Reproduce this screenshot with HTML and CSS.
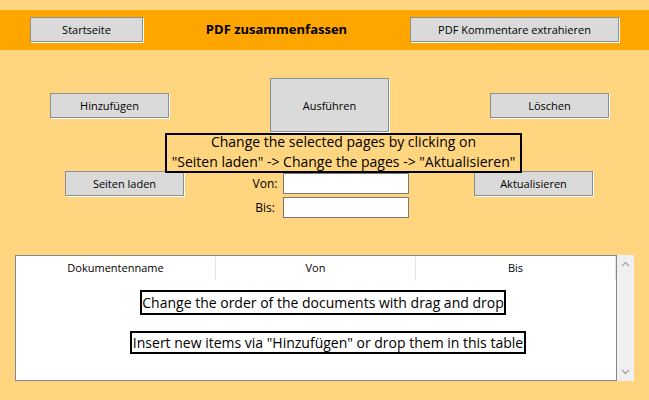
FILE: index.html
```html
<!DOCTYPE html>
<html lang="de">
<head>
<meta charset="utf-8">
<title>PDF zusammenfassen</title>
<link rel="stylesheet" href="styles.css">
</head>
<body>
<div class="app">
  <header class="topbar">
    <button class="btn btn-start">Startseite</button>
    <div class="title">PDF zusammenfassen</div>
    <button class="btn btn-comments">PDF Kommentare extrahieren</button>
  </header>

  <main class="main">
    <div class="row-actions">
      <button class="btn btn-std">Hinzufügen</button>
      <button class="btn btn-std btn-run">Ausführen</button>
      <button class="btn btn-std">Löschen</button>
    </div>

    <div class="hint hint-pages"><div class="hint-text">Change the selected pages by clicking on<br>"Seiten laden" -&gt; Change the pages -&gt; "Aktualisieren"</div></div>

    <div class="row-pages">
      <button class="btn btn-std">Seiten laden</button>
      <div class="range">
        <label class="range-label" for="von">Von:</label>
        <input class="range-input" id="von" type="text">
        <label class="range-label" for="bis">Bis:</label>
        <input class="range-input" id="bis" type="text">
      </div>
      <button class="btn btn-std btn-update">Aktualisieren</button>
    </div>

    <div class="table-wrap">
      <div class="table">
        <div class="thead">
          <div class="th">Dokumentenname</div>
          <div class="th">Von</div>
          <div class="th">Bis</div>
        </div>
        <div class="tbody">
          <div class="hint hint-order">Change the order of the documents with drag and drop</div>
          <div class="hint hint-insert">Insert new items via "Hinzufügen" or drop them in this table</div>
        </div>
      </div>
      <div class="scrollbar">
        <svg class="arrow" width="9" height="6" viewBox="0 0 9 6"><path d="M1 5 L4.5 1.5 L8 5" fill="none" stroke="#a6a6a6" stroke-width="1.4"/></svg>
        <svg class="arrow" width="9" height="6" viewBox="0 0 9 6"><path d="M1 1 L4.5 4.5 L8 1" fill="none" stroke="#a6a6a6" stroke-width="1.4"/></svg>
      </div>
    </div>
  </main>
</div>
</body>
</html>
```

FILE: styles.css
```css
* { box-sizing: border-box; }

html, body {
  margin: 0;
  padding: 0;
}

body {
  width: 649px;
  height: 400px;
  overflow: hidden;
  background: #ffd580;
  font-family: "Open Sans", "Noto Sans", sans-serif;
  color: #000;
}

.app {
  padding-top: 10px;
}

.topbar {
  height: 40px;
  background: #ffa500;
  display: flex;
  align-items: flex-start;
  padding: 7px 0 0 30px;
}

.btn {
  font-family: "Open Sans", "Noto Sans", sans-serif;
  font-size: 11px;
  color: #000;
  background: #dadada;
  border: 1px solid #8f8f8f;
  box-shadow: 1px 1px 0 #ffffff;
  height: 25px;
  padding: 0;
  margin: 0;
  border-radius: 0;
}

.btn-start { width: 113px; }

.title {
  width: 267px;
  text-align: center;
  font-weight: bold;
  font-size: 13px;
  line-height: 25px;
}

.btn-comments { width: 209px; }

.main {
  position: relative;
}

.row-actions {
  display: flex;
  align-items: center;
  gap: 101px;
  padding-left: 50px;
  margin-top: 28px;
  height: 54px;
}

.btn-std { width: 119px; }

.btn-run { height: 54px; }

.hint {
  border: 2px solid #000;
  font-size: 14px;
  text-align: center;
  white-space: nowrap;
}

.hint-pages {
  position: absolute;
  left: 165px;
  top: 55px;
  width: 357px;
  height: 40px;
  background: #ffd580;
}

.hint-text {
  line-height: 20px;
  margin-top: -3px;
}

.row-pages {
  display: flex;
  align-items: flex-start;
  padding-left: 65px;
  margin-top: 39px;
}

.range {
  display: grid;
  grid-template-columns: 30px 126px;
  column-gap: 3px;
  row-gap: 3px;
  margin: 2px 0 0 66px;
  align-items: center;
}

.range-label {
  font-size: 12px;
  text-align: center;
}

.range-input {
  width: 126px;
  height: 21px;
  border: 1px solid #7a7a7a;
  background: #fff;
  margin: 0;
  padding: 0 3px;
  font-size: 12px;
}

.btn-update { margin-left: 65px; }

.table-wrap {
  display: flex;
  margin: 37px 0 0 15px;
}

.table {
  width: 602px;
  height: 126px;
  background: #fff;
  border: 1px solid #828790;
}

.thead {
  display: flex;
  height: 24px;
}

.th {
  width: 200px;
  border-right: 1px solid #e5e5e5;
  font-size: 11px;
  text-align: center;
  line-height: 24px;
}

.tbody {
  display: flex;
  flex-direction: column;
  align-items: flex-start;
}

.hint-order {
  margin: 10px 0 0 124px;
  width: 366px;
  height: 25px;
  line-height: 21px;
}

.hint-insert {
  margin: 16px 0 0 114px;
  width: 396px;
  height: 23px;
  line-height: 19px;
}

.scrollbar {
  width: 17px;
  height: 126px;
  background: #f0f0f0;
  display: flex;
  flex-direction: column;
  justify-content: space-between;
  align-items: center;
  padding: 6px 0 6px;
}

.arrow { display: block; }
```
